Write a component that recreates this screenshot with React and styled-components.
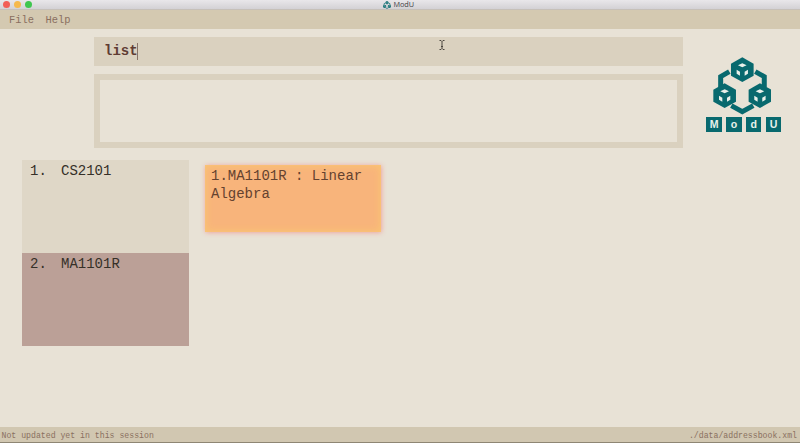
import React from "react";
import styled, { createGlobalStyle } from "styled-components";

const GlobalStyle = createGlobalStyle`
  * { box-sizing: border-box; }
  body { margin: 0; background: #e8e2d6; overflow: hidden; }
`;

const Window = styled.div`
  display: flex;
  flex-direction: column;
  width: 800px;
  height: 443px;
  background: #e8e2d6;
  font-family: "Courier New", "Liberation Mono", monospace;
`;

const TitleBar = styled.header`
  display: grid;
  grid-template-columns: 1fr auto 1fr;
  align-items: center;
  height: 10px;
  padding-left: 3px;
  background: linear-gradient(#e9e7ea, #d3d1d5);
  border-bottom: 1px solid #c6c0b9;
`;

const Lights = styled.div`
  display: flex;
  gap: 4px;
`;

const Light = styled.span`
  width: 7px;
  height: 7px;
  border-radius: 50%;
  background: ${(p) => p.$color};
`;

const Title = styled.div`
  display: flex;
  align-items: center;
  gap: 2.5px;
  font: 7.3px/9px "Open Sans", "Liberation Sans", sans-serif;
  color: #454347;
  padding-right: 6px;
`;

const MenuBar = styled.nav`
  display: flex;
  gap: 11.5px;
  height: 19px;
  padding: 0 9px;
  background: #d4c9b1;
  font-size: 10.4px;
  line-height: 20px;
  color: #8a6f60;
`;

const Top = styled.section`
  display: flex;
  height: 131px;
  padding: 7.6px 0 0 94px;
`;

const Fields = styled.div`
  display: flex;
  flex-direction: column;
  gap: 8px;
  width: 588.5px;
`;

const CommandBox = styled.div`
  display: flex;
  align-items: center;
  height: 29px;
  padding-left: 10px;
  background: #dad1bf;
  font-size: 14px;
  font-weight: bold;
  color: #5f3c33;
`;

const Caret = styled.span`
  width: 1px;
  height: 17px;
  margin-left: -1px;
  background: #8a7468;
`;

const ResultBox = styled.div`
  height: 74px;
  border: 6px solid #dad1bf;
`;

const Brand = styled.div`
  display: flex;
  flex-direction: column;
  width: 76px;
  margin: 20.4px 0 0 23.8px;
`;

const Tiles = styled.div`
  display: flex;
  justify-content: space-between;
  width: 75px;
  margin-top: 2px;
`;

const Tile = styled.span`
  width: 15.6px;
  height: 15px;
  background: #08696e;
  color: #e8f0ea;
  font: bold 10.6px/15px "Liberation Sans", Arial, sans-serif;
  text-align: center;
`;

const Content = styled.main`
  display: flex;
  align-items: flex-start;
  flex: 1;
  padding-left: 22px;
`;

const ModuleList = styled.div`
  width: 166.5px;
`;

const ModuleRow = styled.div`
  display: flex;
  height: 93px;
  padding: 3px 8px;
  background: ${(p) => (p.$selected ? "#bba097" : "#dfd7c7")};
  font-size: 14px;
  line-height: 17px;
  color: #353028;
`;

const Index = styled.span`
  width: 31px;
`;

const Card = styled.article`
  width: 175.5px;
  height: 67px;
  margin: 5px 0 0 16.5px;
  padding: 3px 4px 3px 6px;
  background: #f8b47b;
  box-shadow: inset 0 0 8px #fac872, inset 0 0 1px #ffe28a, 0 0 5px 0.5px #ef9f99;
  font-size: 14px;
  line-height: 17.5px;
  color: #64422f;
`;

const StatusBar = styled.footer`
  display: flex;
  justify-content: space-between;
  height: 16px;
  padding: 0 3px 0 1.5px;
  background: #d1c7b1;
  border-bottom: 1px solid #8e8674;
  font-size: 8.2px;
  line-height: 17px;
  color: #8a7060;
`;

const IBeam = styled.svg`
  position: absolute;
  left: 438px;
  top: 39px;
`;

const RingDrawing = styled.svg`
  display: block;
  flex: none;
  margin-left: ${(p) => p.$indent || 0}px;
`;

function Cube({ x, y }) {
  return (
    <g transform={`translate(${x} ${y})`}>
      <path d="M0-37 34-18V18L0 37-34 18V-18Z" fill="#08696e" />
      <path
        d="M0-19 13-13 0-7-13-13ZM-17 0-7 6V18L-17 12ZM17 0 7 6V18L17 12Z"
        fill="#e8f0ea"
      />
    </g>
  );
}

function CubeRing({ width, height, indent }) {
  return (
    <RingDrawing $indent={indent} width={width} height={height} viewBox="53 22 176 174">
      <path
        d="M102 66 76 81V112M180 66 207 81V112M108 168 141 186 174 168"
        fill="none"
        stroke="#08696e"
        strokeWidth="15"
      />
      <Cube x={141} y={60} />
      <Cube x={88} y={138} />
      <Cube x={194} y={138} />
    </RingDrawing>
  );
}

const lights = ["#f25e57", "#f6b94c", "#3fc650"];
const modules = ["CS2101", "MA1101R"];

export default function App() {
  return (
    <Window>
      <GlobalStyle />
      <TitleBar>
        <Lights>
          {lights.map((c) => (
            <Light key={c} $color={c} />
          ))}
        </Lights>
        <Title>
          <CubeRing width={8} height={8} />
          ModU
        </Title>
      </TitleBar>
      <MenuBar>
        <span>File</span>
        <span>Help</span>
      </MenuBar>
      <Top>
        <Fields>
          <CommandBox>
            list
            <Caret />
          </CommandBox>
          <ResultBox />
        </Fields>
        <Brand>
          <CubeRing width={58.6} height={58} indent={6.4} />
          <Tiles>
            {["M", "o", "d", "U"].map((l) => (
              <Tile key={l}>{l}</Tile>
            ))}
          </Tiles>
        </Brand>
      </Top>
      <Content>
        <ModuleList>
          {modules.map((name, i) => (
            <ModuleRow key={name} $selected={i === 1}>
              <Index>{i + 1}.</Index>
              {name}
            </ModuleRow>
          ))}
        </ModuleList>
        <Card>1.MA1101R : Linear Algebra</Card>
      </Content>
      <StatusBar>
        <span>Not updated yet in this session</span>
        <span>./data/addressbook.xml</span>
      </StatusBar>
      <IBeam width="8" height="12" viewBox="0 0 8 12">
        <path
          d="M1.5 1.5H3L4 2.5 5 1.5H6.5M4 2.5V9.5M1.5 10.5H3L4 9.5 5 10.5H6.5M3 7.5H5"
          fill="none"
          stroke="#4b463f"
        />
      </IBeam>
    </Window>
  );
}
